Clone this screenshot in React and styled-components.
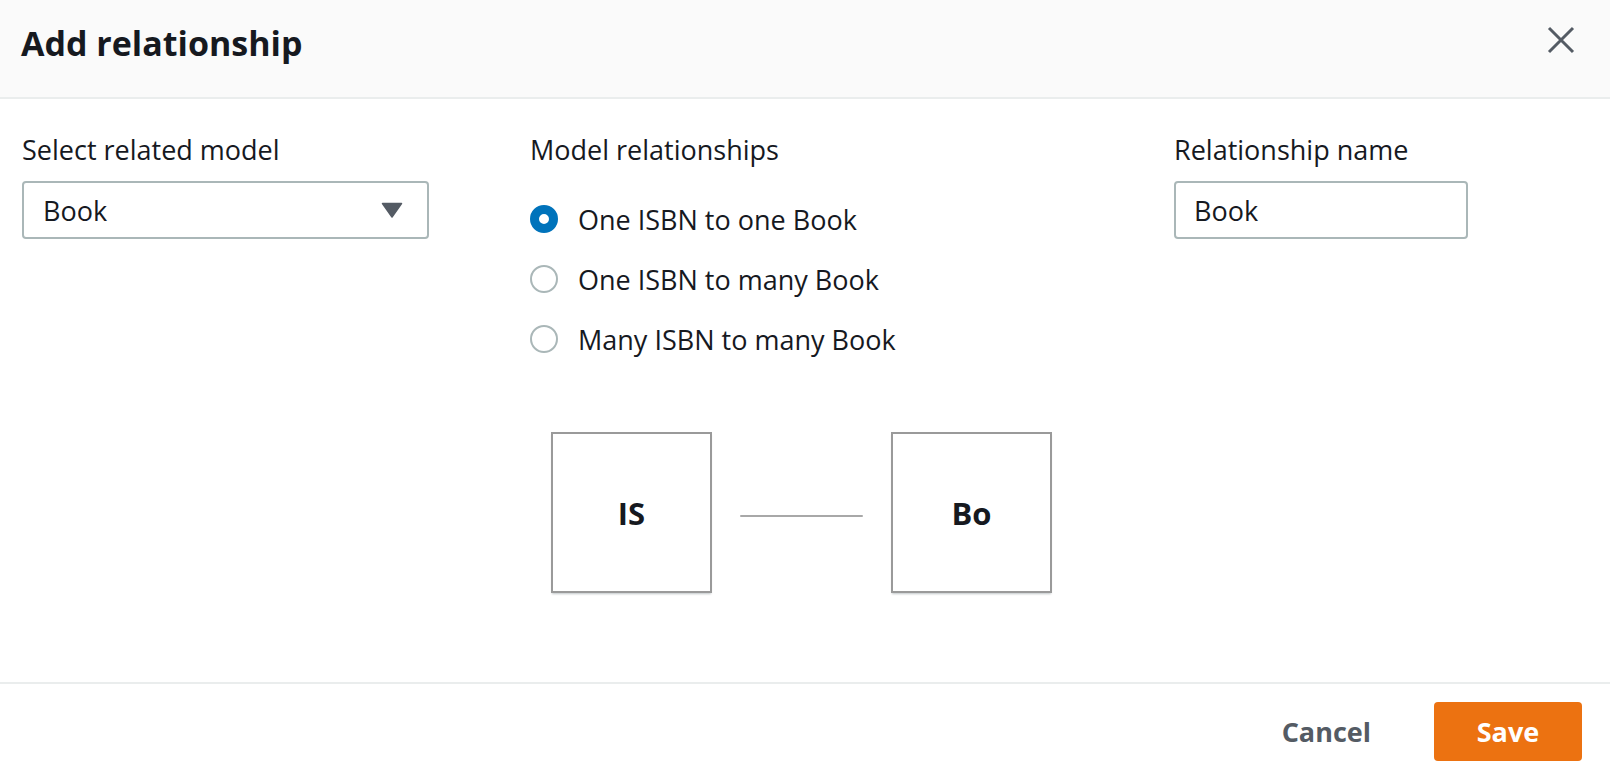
import React, { useState } from 'react';
import styled, { createGlobalStyle } from 'styled-components';

const Global = createGlobalStyle`
  html, body {
    margin: 0;
    padding: 0;
    background: #ffffff;
  }
  body {
    font-family: "Open Sans", "Noto Sans", Arial, sans-serif;
    color: #16191f;
  }
`;

const Modal = styled.div`
  width: 1610px;
  height: 780px;
  display: flex;
  flex-direction: column;
  background: #fff;
`;

const Header = styled.div`
  height: 99px;
  box-sizing: border-box;
  padding: 21px 35px 0 21px;
  background: #fafafa;
  border-bottom: 2px solid #eaeded;
  display: flex;
  justify-content: space-between;
  align-items: flex-start;
  flex-shrink: 0;
`;

const Title = styled.h2`
  margin: 2px 0 0;
  font-size: 34px;
  line-height: 40px;
  font-weight: 700;
  color: #16191f;
`;

const CloseButton = styled.button`
  border: 0;
  background: none;
  padding: 0;
  margin-top: 5px;
  width: 28px;
  height: 28px;
  cursor: pointer;
  display: flex;
`;

const Body = styled.div`
  flex: 1;
  padding: 33px 22px 0 22px;
  display: grid;
  grid-template-columns: 508px 644px 1fr;
  align-items: start;
`;

const Column = styled.div`
  display: flex;
  flex-direction: column;
`;

const Label = styled.div`
  font-size: 27px;
  line-height: 36px;
  margin-bottom: 13px;
`;

const SelectBox = styled.div`
  width: ${(p) => p.width}px;
  height: 58px;
  box-sizing: border-box;
  border: 2px solid #aab7b8;
  border-radius: 4px;
  padding: 0 24px 0 19px;
  display: flex;
  align-items: center;
  justify-content: space-between;
  font-size: 27px;
  background: #fff;
  cursor: pointer;
`;

const TextInput = styled.input`
  width: ${(p) => p.width}px;
  height: 58px;
  box-sizing: border-box;
  border: 2px solid #aab7b8;
  border-radius: 4px;
  padding: 0 18px;
  font-family: inherit;
  font-size: 27px;
  color: #16191f;
  outline: none;
`;

const RadioList = styled.div`
  margin-top: 8px;
  display: flex;
  flex-direction: column;
`;

const RadioRow = styled.label`
  height: 60px;
  display: flex;
  align-items: center;
  gap: 20px;
  font-size: 27px;
  cursor: pointer;
`;

const RadioDot = styled.span`
  width: 28px;
  height: 28px;
  box-sizing: border-box;
  border-radius: 50%;
  flex-shrink: 0;
  background: #fff;
  border: ${(p) => (p.checked ? '9px solid #0073bb' : '2px solid #aab7b8')};
`;

const Diagram = styled.div`
  margin: 63px 0 0 21px;
  display: flex;
  align-items: center;
`;

const ModelBox = styled.div`
  width: 161px;
  height: 161px;
  box-sizing: border-box;
  border: 2px solid #9a9a9a;
  box-shadow: 0 2px 2px -1px rgba(0, 28, 36, 0.25);
  display: flex;
  align-items: center;
  justify-content: center;
  font-size: 31px;
  font-weight: 700;
`;

const Connector = styled.div`
  width: 123px;
  height: 2px;
  margin: 6px 28px 0;
  background: #a8a8a8;
  border-radius: 1px;
`;

const Footer = styled.div`
  height: 98px;
  box-sizing: border-box;
  border-top: 2px solid #eaeded;
  padding: 18px 28px 0;
  display: flex;
  justify-content: flex-end;
  align-items: flex-start;
  flex-shrink: 0;
`;

const LinkButton = styled.button`
  height: 59px;
  border: 0;
  background: none;
  padding: 0 30px;
  margin-right: 33px;
  font-family: inherit;
  font-size: 27px;
  font-weight: 700;
  color: #545b64;
  cursor: pointer;
`;

const PrimaryButton = styled.button`
  width: 148px;
  height: 59px;
  border: 0;
  border-radius: 4px;
  background: #ec7211;
  color: #fff;
  font-family: inherit;
  font-size: 27px;
  font-weight: 700;
  cursor: pointer;
`;

const options = [
  'One ISBN to one Book',
  'One ISBN to many Book',
  'Many ISBN to many Book',
];

export default function App() {
  const [choice, setChoice] = useState(0);
  const [name, setName] = useState('Book');

  return (
    <Modal>
      <Global />
      <Header>
        <Title>Add relationship</Title>
        <CloseButton aria-label="Close">
          <svg width="28" height="28" viewBox="0 0 28 28">
            <path d="M2 2 L26 26 M26 2 L2 26" stroke="#545b64" strokeWidth="3" fill="none" />
          </svg>
        </CloseButton>
      </Header>

      <Body>
        <Column>
          <Label>Select related model</Label>
          <SelectBox width={407}>
            <span>Book</span>
            <svg width="22" height="16" viewBox="0 0 22 16">
              <path d="M1.5 1.5 H20.5 L11 15 Z" fill="#545b64" stroke="#545b64" strokeWidth="1.5" strokeLinejoin="round" />
            </svg>
          </SelectBox>
        </Column>

        <Column>
          <Label>Model relationships</Label>
          <RadioList>
            {options.map((o, i) => (
              <RadioRow key={o} onClick={() => setChoice(i)}>
                <RadioDot checked={choice === i} />
                {o}
              </RadioRow>
            ))}
          </RadioList>
          <Diagram>
            <ModelBox>IS</ModelBox>
            <Connector />
            <ModelBox>Bo</ModelBox>
          </Diagram>
        </Column>

        <Column>
          <Label>Relationship name</Label>
          <TextInput width={294} value={name} onChange={(e) => setName(e.target.value)} />
        </Column>
      </Body>

      <Footer>
        <LinkButton>Cancel</LinkButton>
        <PrimaryButton>Save</PrimaryButton>
      </Footer>
    </Modal>
  );
}
